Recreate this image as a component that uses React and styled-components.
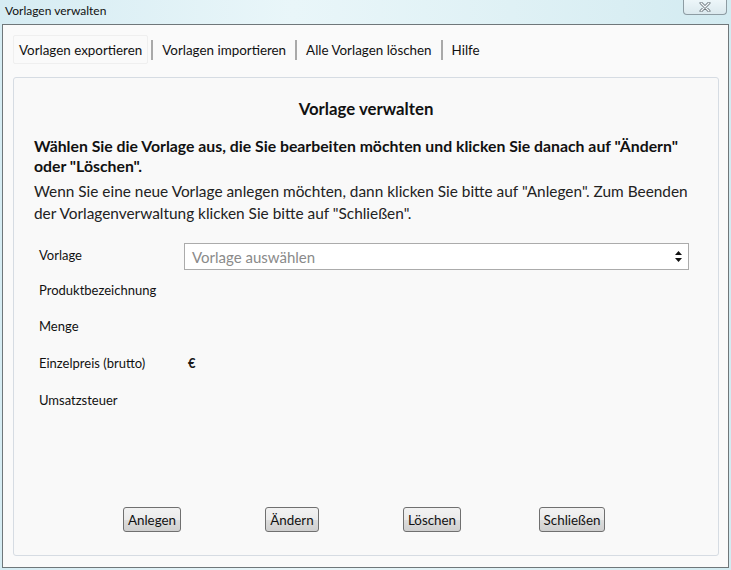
import React from "react";
import styled, { createGlobalStyle } from "styled-components";

const GlobalStyle = createGlobalStyle`
  html, body {
    margin: 0;
    padding: 0;
  }
  body {
    width: 731px;
    height: 570px;
    overflow: hidden;
    background: linear-gradient(90deg, #d6ecf3 0%, #e9f6f9 40%, #dff1f5 70%, #d3ebf1 100%);
    font-family: "Lato", "Liberation Sans", sans-serif;
    color: #1a1a1a;
  }
`;

const Window = styled.div`
  width: 731px;
  height: 570px;
  display: flex;
  flex-direction: column;
`;

const TitleBar = styled.div`
  height: 24px;
  display: flex;
  justify-content: space-between;
  align-items: flex-start;
  padding-left: 5px;
  padding-right: 4px;
`;

const Title = styled.span`
  font-size: 12px;
  line-height: 21px;
  color: #111;
`;

const CloseButton = styled.div`
  width: 42px;
  height: 15px;
  margin-top: -1px;
  border: 1px solid #8d9ca3;
  border-top: none;
  border-radius: 0 0 4px 4px;
  background: linear-gradient(#eef7fa, #dbe9ee);
  display: flex;
  align-items: center;
  justify-content: center;
`;

const CloseGlyph = styled.svg`
  width: 12px;
  height: 10px;
`;

const Dialog = styled.div`
  flex: 1;
  margin: 0 2px 2px 2px;
  border: 1px solid #6f777a;
  background: #fafafa;
  display: flex;
  flex-direction: column;
  padding: 11px 9px 11px 10px;
`;

const MenuBar = styled.div`
  display: flex;
  align-items: center;
  height: 27px;
`;

const MenuItem = styled.div`
  height: 27px;
  padding: 0 5px;
  display: flex;
  align-items: center;
  font-size: 13.4px;
  color: #111;
  border: 1px solid ${(p) => (p.active ? "#efefef" : "transparent")};
  border-radius: 2px;
`;

const Separator = styled.div`
  width: 2px;
  height: 20px;
  background: #a9a9a9;
  margin: 0 3px;
`;

const Panel = styled.div`
  flex: 1;
  margin-top: 14px;
  border: 1px solid #d6dce3;
  border-radius: 3px;
  background: #f9f9f9;
  display: flex;
  flex-direction: column;
  padding: 20px 20px 0 20px;
`;

const Heading = styled.h2`
  margin: 0;
  text-align: center;
  font-size: 16.8px;
  font-weight: bold;
  line-height: 22px;
  color: #111;
`;

const Lead = styled.p`
  margin: 16px 0 0 0;
  font-size: 15.8px;
  font-weight: bold;
  line-height: 20px;
  color: #111;
`;

const Info = styled.p`
  margin: 4px 0 0 0;
  font-size: 15.4px;
  line-height: 22px;
  color: #222;
`;

const Form = styled.div`
  display: grid;
  grid-template-columns: 145px 1fr;
  grid-template-rows: 35px 36px 37px 37px 37px;
  margin: 20px 9px 0 5px;
`;

const Label = styled.div`
  font-size: 13px;
  color: #111;
  padding-top: 3px;
`;

const Value = styled.div`
  font-size: 13px;
  font-weight: bold;
  padding-top: 3px;
  padding-left: 4px;
`;

const SelectBox = styled.div`
  height: 25px;
  margin-top: -1px;
  border: 1px solid #ababab;
  background: #fff;
  display: flex;
  align-items: center;
  justify-content: space-between;
  padding: 0 6px 0 7px;
  font-size: 15px;
  color: #8a8a8a;
`;

const Arrows = styled.svg`
  width: 7px;
  height: 11px;
`;

const ButtonRow = styled.div`
  margin-top: auto;
  margin-bottom: 23px;
  margin-right: 8px;
  display: flex;
  justify-content: center;
`;

const Cell = styled.div`
  width: 140px;
  display: flex;
  justify-content: center;
`;

const Button = styled.button`
  height: 25px;
  padding: 0 4px;
  border: 1px solid #707070;
  border-radius: 3px;
  background: linear-gradient(#f2f2f2 0%, #ebebeb 50%, #dddddd 51%, #cfcfcf 100%);
  font-family: inherit;
  font-size: 13.4px;
  color: #111;
`;

const rows = [
  ["Produktbezeichnung", ""],
  ["Menge", ""],
  ["Einzelpreis (brutto)", "€"],
  ["Umsatzsteuer", ""],
];

export default function App() {
  return (
    <Window>
      <GlobalStyle />
      <TitleBar>
        <Title>Vorlagen verwalten</Title>
        <CloseButton>
          <CloseGlyph viewBox="0 0 12 10">
            <path d="M2 1 L10 9 M10 1 L2 9" stroke="#6f7a80" strokeWidth="3" strokeLinecap="round" />
            <path d="M2 1 L10 9 M10 1 L2 9" stroke="#f4f8fa" strokeWidth="1.2" strokeLinecap="round" />
          </CloseGlyph>
        </CloseButton>
      </TitleBar>
      <Dialog>
        <MenuBar>
          <MenuItem active>Vorlagen exportieren</MenuItem>
          <Separator />
          <MenuItem>Vorlagen importieren</MenuItem>
          <Separator />
          <MenuItem>Alle Vorlagen löschen</MenuItem>
          <Separator />
          <MenuItem>Hilfe</MenuItem>
        </MenuBar>
        <Panel>
          <Heading>Vorlage verwalten</Heading>
          <Lead>
            Wählen Sie die Vorlage aus, die Sie bearbeiten möchten und klicken Sie danach auf "Ändern"
            oder "Löschen".
          </Lead>
          <Info>
            Wenn Sie eine neue Vorlage anlegen möchten, dann klicken Sie bitte auf "Anlegen". Zum Beenden
            der Vorlagenverwaltung klicken Sie bitte auf "Schließen".
          </Info>
          <Form>
            <Label>Vorlage</Label>
            <SelectBox>
              Vorlage auswählen
              <Arrows viewBox="0 0 7 11">
                <path d="M3.5 0 L7 4 L0 4 Z M0 7 L7 7 L3.5 11 Z" fill="#111" />
              </Arrows>
            </SelectBox>
            {rows.map(([label, value]) => (
              <React.Fragment key={label}>
                <Label>{label}</Label>
                <Value>{value}</Value>
              </React.Fragment>
            ))}
          </Form>
          <ButtonRow>
            <Cell><Button>Anlegen</Button></Cell>
            <Cell><Button>Ändern</Button></Cell>
            <Cell><Button>Löschen</Button></Cell>
            <Cell><Button>Schließen</Button></Cell>
          </ButtonRow>
        </Panel>
      </Dialog>
    </Window>
  );
}
